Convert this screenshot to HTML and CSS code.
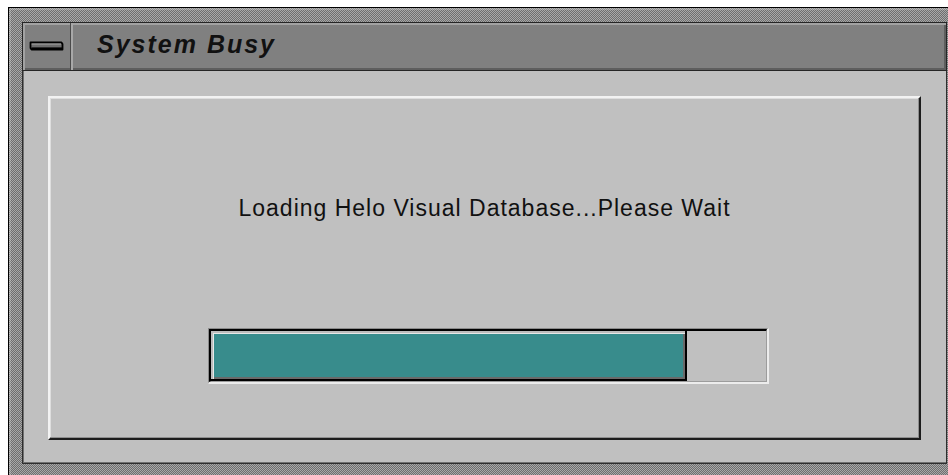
FILE: index.html
```html
<!DOCTYPE html>
<html lang="en">
<head>
<meta charset="utf-8">
<title>System Busy</title>
<link rel="stylesheet" href="styles.css">
</head>
<body>
  <div class="window">
    <div class="titlebar">
      <div class="menu-btn">
        <svg class="menu-icon" width="35" height="10" viewBox="0 0 35 10" aria-hidden="true">
          <!-- window-menu bar: shaded slab with a heavier lower edge -->
          <path d="M1.5 1.5 H32.5 L33.5 3 V8.5 H2.5 L1.5 7 Z" fill="#6e6e6e" stroke="#000" stroke-width="1.8" stroke-linejoin="round"/>
          <path d="M2.6 3 H32" stroke="#a8a8a8" stroke-width="1"/>
          <path d="M2.5 7.4 H33" stroke="#000" stroke-width="2"/>
        </svg>
      </div>
      <div class="title">System Busy</div>
    </div>
    <div class="client">
      <div class="panel">
        <p class="message">Loading Helo Visual Database...Please Wait</p>
        <div class="trough">
          <div class="track">
            <div class="fill" style="width: 85.8%"></div>
          </div>
        </div>
      </div>
    </div>
  </div>
</body>
</html>
```
FILE: styles.css
```css
html, body {
  margin: 0;
  background: #ffffff;
}

body {
  width: 948px;
  height: 475px;
  overflow: hidden;
}

/* Outer window with the dithered resize frame */
.window {
  box-sizing: border-box;
  width: 940px;
  height: 468px;
  margin: 7px 0 0 8px;
  padding: 14px 1px 0 13px;
  border-top: 1px solid #000;
  border-left: 1px solid #000;
  background: repeating-conic-gradient(#a8a8a8 0 25%, #6e6e6e 0 50%) 0 0 / 2px 2px;
  box-shadow: inset 2px 2px 0 rgba(255, 255, 255, 0.18);
  display: flex;
  flex-direction: column;
}

/* Title bar */
.titlebar {
  box-sizing: border-box;
  height: 49px;
  flex: none;
  display: flex;
  background: #808080;
  border: 1px solid #262626;
  box-shadow: inset 2px 2px 0 #a2a2a2, inset -2px -2px 0 #5e5e5e;
}

.menu-btn {
  width: 48px;
  flex: none;
  display: flex;
  align-items: center;
  justify-content: center;
  border-right: 1px solid #4a4a4a;
  box-shadow: 2px 0 0 #a8a8a8;
  padding-bottom: 2px;
  box-sizing: border-box;
}

.title {
  margin-left: 26px;
  align-self: center;
  padding-bottom: 5px;
  font-family: "Liberation Sans", Arial, sans-serif;
  font-style: italic;
  font-weight: bold;
  font-size: 25px;
  letter-spacing: 2px;
  color: #111;
}

/* Client area */
.client {
  box-sizing: border-box;
  height: 393px;
  flex: none;
  background: #c0c0c0;
  border: 1px solid #2e2e2e;
  border-top: 0;
  box-shadow: inset 1px 0 0 #707070, inset 0 -1px 0 #707070;
  overflow: hidden;
}

/* Raised inner panel */
.panel {
  box-sizing: border-box;
  width: 873px;
  height: 344px;
  margin: 25px 0 0 25px;
  padding-top: 97px;
  border: 2px solid;
  border-color: #f2f2f2 #1c1c1c #1c1c1c #f2f2f2;
  box-shadow: inset -1px -1px 0 #8e8e8e, inset 1px 1px 0 #dedede;
  display: flex;
  flex-direction: column;
  align-items: center;
}

.message {
  margin: 0;
  font-family: "Liberation Sans", Arial, sans-serif;
  font-size: 23px;
  line-height: 27px;
  letter-spacing: 1px;
  color: #111;
}

/* Sunken progress trough */
.trough {
  box-sizing: border-box;
  align-self: flex-start;
  width: 561px;
  height: 56px;
  margin: 106px 0 0 158px;
  border-style: solid;
  border-width: 1px 2px 2px 1px;
  border-color: #8a8a8a #ececec #ececec #8a8a8a;
}

.track {
  box-sizing: border-box;
  height: 100%;
  border-style: solid;
  border-width: 2px 1px 1px 2px;
  border-color: #000 #9c9c9c #9c9c9c #000;
}

.fill {
  box-sizing: border-box;
  height: 100%;
  background: #388c8c;
  border-right: 2px solid #000;
  border-bottom: 2px solid #000;
  box-shadow: inset 2px 2px 0 #bcbcbc, inset 3px 3px 0 #e8e8e8, inset -2px -2px 0 #6a6a6a;
}
```
